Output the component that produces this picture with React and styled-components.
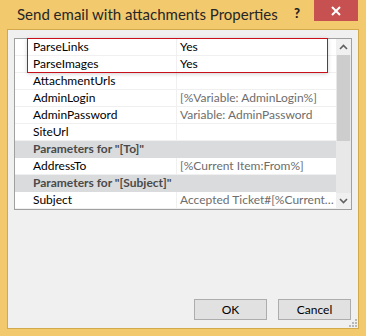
import styled, { createGlobalStyle } from "styled-components";

const GlobalStyle = createGlobalStyle`
  html, body {
    margin: 0;
    padding: 0;
    background: #f2c96d;
  }
  * {
    box-sizing: border-box;
  }
`;

const Window = styled.div`
  width: 366px;
  height: 336px;
  display: flex;
  flex-direction: column;
  background: #f2c96d;
  font-family: Lato, "Noto Sans", sans-serif;
  overflow: hidden;
`;

const TitleBar = styled.div`
  height: 29px;
  display: flex;
  align-items: flex-start;
  padding-left: 17px;
`;

const Title = styled.div`
  flex: 1;
  min-width: 0;
  font-size: 15px;
  line-height: 29px;
  color: #262626;
  white-space: nowrap;
  overflow: hidden;
`;

const HelpButton = styled.div`
  width: 16px;
  margin-top: 5px;
  margin-right: 9px;
  font-size: 13px;
  font-weight: 900;
  color: #222;
  text-align: center;
`;

const CloseButton = styled.div`
  width: 44px;
  height: 21px;
  margin-right: 8px;
  flex-shrink: 0;
  background: #c75050;
  display: flex;
  align-items: center;
  justify-content: center;
`;

const Client = styled.div`
  position: relative;
  flex: 1;
  margin: 0 7px 7px 7px;
  border: 1px solid #d2a94b;
  background: #f0f0f0;
  display: flex;
  flex-direction: column;
  padding: 8px 6px 8px 6px;
`;

const Grid = styled.div`
  position: relative;
  height: 172px;
  border: 1px solid #a0a0a0;
  background: #fff;
  display: flex;
`;

const Rows = styled.div`
  flex: 1;
  min-width: 0;
  display: flex;
  flex-direction: column;
`;

const Row = styled.div`
  height: 17px;
  display: flex;
  font-size: 12px;
  line-height: 16px;
  background: ${(p) => (p.$category ? "#dadbdc" : "#fff")};
  border-bottom: 1px solid ${(p) => (p.$category ? "#dadbdc" : "#f0f0f0")};
`;

const Margin = styled.div`
  width: 12px;
  flex-shrink: 0;
  background: ${(p) => (p.$category ? "#dadbdc" : "#fff")};
`;

const NameCell = styled.div`
  width: 150px;
  flex-shrink: 0;
  padding-left: 6px;
  color: #000;
  white-space: nowrap;
  overflow: hidden;
  border-right: 1px solid #f0f0f0;
`;

const CategoryCell = styled.div`
  flex: 1;
  padding-left: 6px;
  color: #4a4a4a;
  font-weight: 700;
  white-space: nowrap;
`;

const ValueCell = styled.div`
  flex: 1;
  min-width: 0;
  padding-left: 3px;
  padding-right: 2px;
  color: ${(p) => (p.$muted ? "#6d6d6d" : "#000")};
  white-space: nowrap;
  overflow: hidden;
  text-overflow: ellipsis;
`;

const ScrollBar = styled.div`
  width: 15px;
  flex-shrink: 0;
  background: #e8e8e8;
  display: flex;
  flex-direction: column;
  align-items: center;
`;

const ScrollArrow = styled.div`
  height: 16px;
  width: 100%;
  display: flex;
  align-items: center;
  justify-content: center;
  background: #f0f0f0;
`;

const Thumb = styled.div`
  width: 13px;
  height: 86px;
  background: #cdcdcd;
`;

const Track = styled.div`
  flex: 1;
`;

const Highlight = styled.div`
  position: absolute;
  left: 12px;
  top: -1px;
  width: 301px;
  height: 35px;
  border: 1.5px solid #c8101a;
  box-shadow: 0 1px 4px rgba(0, 0, 0, 0.18);
  pointer-events: none;
`;

const Footer = styled.div`
  flex: 1;
  display: flex;
  justify-content: flex-end;
  align-items: flex-end;
  gap: 11px;
  padding-right: 1px;
`;

const Button = styled.button`
  width: 73px;
  height: 21px;
  background: #e1e1e1;
  border: 1px solid #adadad;
  font-family: Lato, "Noto Sans", sans-serif;
  font-size: 12px;
  color: #000;
  padding: 0;
  line-height: 18px;
`;

const Grip = styled.svg`
  position: absolute;
  right: 1px;
  bottom: 1px;
`;

const rows = [
  { name: "ParseLinks", value: "Yes" },
  { name: "ParseImages", value: "Yes" },
  { name: "AttachmentUrls", value: "" },
  { name: "AdminLogin", value: "[%Variable: AdminLogin%]", muted: true },
  { name: "AdminPassword", value: "Variable: AdminPassword", muted: true },
  { name: "SiteUrl", value: "" },
  { category: 'Parameters for "[To]"' },
  { name: "AddressTo", value: "[%Current Item:From%]", muted: true },
  { category: 'Parameters for "[Subject]"' },
  {
    name: "Subject",
    value: "Accepted Ticket#[%Current Item:ID%] - [%Current Item:Title%]",
    muted: true,
  },
];

function Chevron({ up }) {
  return (
    <svg width="9" height="6" viewBox="0 0 9 6">
      <path
        d={up ? "M1 5 L4.5 1.5 L8 5" : "M1 1 L4.5 4.5 L8 1"}
        fill="none"
        stroke="#606060"
        strokeWidth="1.6"
      />
    </svg>
  );
}

export default function App() {
  return (
    <>
      <GlobalStyle />
      <Window>
        <TitleBar>
          <Title>Send email with attachments Properties</Title>
          <HelpButton>?</HelpButton>
          <CloseButton>
            <svg width="10" height="10" viewBox="0 0 10 10">
              <path d="M1 1 L9 9 M9 1 L1 9" stroke="#fff" strokeWidth="2" />
            </svg>
          </CloseButton>
        </TitleBar>
        <Client>
          <Grid>
            <Rows>
              {rows.map((r, i) =>
                r.category ? (
                  <Row key={i} $category>
                    <Margin $category />
                    <CategoryCell>{r.category}</CategoryCell>
                  </Row>
                ) : (
                  <Row key={i}>
                    <Margin />
                    <NameCell>{r.name}</NameCell>
                    <ValueCell $muted={r.muted}>{r.value}</ValueCell>
                  </Row>
                )
              )}
            </Rows>
            <ScrollBar>
              <ScrollArrow>
                <Chevron up />
              </ScrollArrow>
              <Thumb />
              <Track />
              <ScrollArrow>
                <Chevron />
              </ScrollArrow>
            </ScrollBar>
            <Highlight />
          </Grid>
          <Footer>
            <Button>OK</Button>
            <Button>Cancel</Button>
          </Footer>
          <Grip width="9" height="9" viewBox="0 0 9 9">
            {[
              [7, 1],
              [4, 4],
              [7, 4],
              [1, 7],
              [4, 7],
              [7, 7],
            ].map(([x, y], i) => (
              <rect key={i} x={x} y={y} width="2" height="2" fill="#b8b8b8" />
            ))}
          </Grip>
        </Client>
      </Window>
    </>
  );
}
